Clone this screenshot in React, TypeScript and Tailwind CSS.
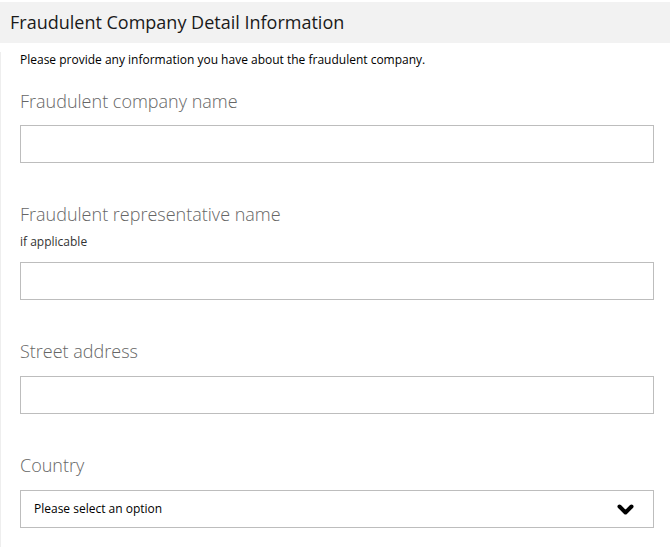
const font = { fontFamily: '"Open Sans", "Noto Sans", sans-serif' };

function Label({ text, className = "" }: { text: string; className?: string }) {
  return (
    <div className={`text-[18px] leading-[24px] font-light text-[#666666] ${className}`}>
      {text}
    </div>
  );
}

function TextInput({ className = "" }: { className?: string }) {
  return (
    <input
      type="text"
      className={`block h-[38px] w-[634px] border border-[#bdbdbd] bg-white px-3 text-[13px] outline-none ${className}`}
    />
  );
}

function Chevron() {
  return (
    <svg width="17" height="11" viewBox="0 0 17 11" aria-hidden="true">
      <path
        d="M2.5 2.5 L8.5 8.5 L14.5 2.5"
        fill="none"
        stroke="#000"
        strokeWidth="4"
        strokeLinecap="round"
        strokeLinejoin="round"
      />
    </svg>
  );
}

export default function App() {
  return (
    <div
      className="h-[547px] w-[670px] overflow-hidden bg-white pt-[2px] text-black"
      style={font}
    >
      <div className="flex h-[41px] items-center bg-[#f2f2f2] px-[10px] text-[18px] text-[#1a1a1a]">
        Fraudulent Company Detail Information
      </div>

      <div className="h-full border-l border-[#eeeeee] px-[19px]">
        <p className="mt-[9px] text-[12px] leading-[16px] text-black">
          Please provide any information you have about the fraudulent company.
        </p>

        <Label text="Fraudulent company name" className="mt-[21px]" />
        <TextInput className="mt-[12px]" />

        <Label text="Fraudulent representative name" className="mt-[39px]" />
        <div className="mt-[8px] text-[12px] leading-[16px] text-[#333333]">if applicable</div>
        <TextInput className="mt-[12px]" />

        <Label text="Street address" className="mt-[39px]" />
        <TextInput className="mt-[13px]" />

        <Label text="Country" className="mt-[39px]" />
        <div className="mt-[13px] flex h-[38px] w-[634px] items-center justify-between border border-[#bdbdbd] bg-white pl-[13px] pr-[19px]">
          <span className="text-[12px] text-black">Please select an option</span>
          <Chevron />
        </div>
      </div>
    </div>
  );
}
